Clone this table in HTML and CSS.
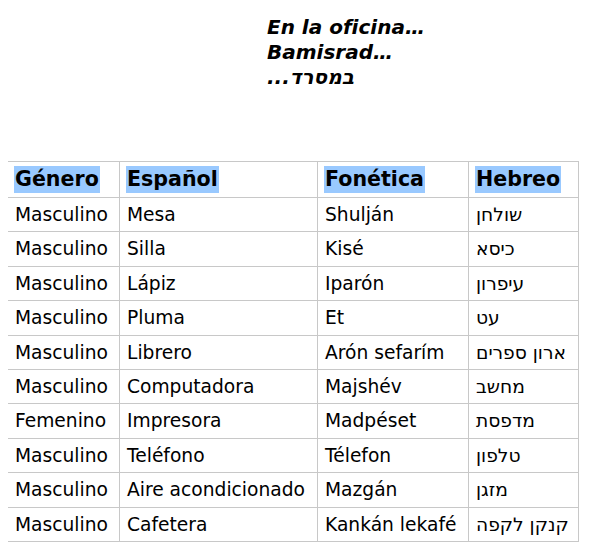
FILE: index.html
```html
<!DOCTYPE html>
<html lang="es">
<head>
<meta charset="utf-8">
<title>En la oficina</title>
<link rel="stylesheet" href="styles.css">
</head>
<body>
<div class="title">
  <div>En la oficina…</div>
  <div>Bamisrad…</div>
  <div dir="ltr">...<span lang="he">במסרד</span></div>
</div>
<table class="vocab">
  <colgroup>
    <col class="c1"><col class="c2"><col class="c3"><col class="c4">
  </colgroup>
  <thead>
    <tr><th><span class="hl">Género</span></th><th><span class="hl">Español</span></th><th><span class="hl">Fonética</span></th><th><span class="hl">Hebreo</span></th></tr>
  </thead>
  <tbody>
    <tr><td>Masculino</td><td>Mesa</td><td>Shulján</td><td lang="he">שולחן</td></tr>
    <tr><td>Masculino</td><td>Silla</td><td>Kisé</td><td lang="he">כיסא</td></tr>
    <tr><td>Masculino</td><td>Lápiz</td><td>Iparón</td><td lang="he">עיפרון</td></tr>
    <tr><td>Masculino</td><td>Pluma</td><td>Et</td><td lang="he">עט</td></tr>
    <tr><td>Masculino</td><td>Librero</td><td>Arón sefarím</td><td lang="he">ארון ספרים</td></tr>
    <tr><td>Masculino</td><td>Computadora</td><td>Majshév</td><td lang="he">מחשב</td></tr>
    <tr><td>Femenino</td><td>Impresora</td><td>Madpéset</td><td lang="he">מדפסת</td></tr>
    <tr><td>Masculino</td><td>Teléfono</td><td>Télefon</td><td lang="he">טלפון</td></tr>
    <tr><td>Masculino</td><td>Aire acondicionado</td><td>Mazgán</td><td lang="he">מזגן</td></tr>
    <tr><td>Masculino</td><td>Cafetera</td><td>Kankán lekafé</td><td lang="he">קנקן לקפה</td></tr>
  </tbody>
</table>
</body>
</html>
```
FILE: styles.css
```css
html, body {
  background: #ffffff;
}
body {
  margin: 8px;
  font-family: "DejaVu Sans", sans-serif;
  color: #000;
}
.title {
  margin: 7px 0 0 259px;
  font-size: 20px;
  line-height: 25px;
  font-weight: bold;
  font-style: italic;
}
.vocab {
  margin-top: 71px;
  margin-left: -1px;
  border-collapse: collapse;
  table-layout: fixed;
  width: 571px;
}
.c1 { width: 112px; }
.c2 { width: 198px; }
.c3 { width: 151px; }
.c4 { width: 110px; }
.vocab th, .vocab td {
  border: 1px solid #c8c8c8;
  text-align: left;
  vertical-align: middle;
  white-space: nowrap;
}
.vocab th {
  padding: 4px 6px;
  font-size: 20.6px;
  font-weight: bold;
}
.hl {
  display: inline-block;
  background: #99c9ff;
  line-height: 27px;
  padding: 0 1px;
}
.vocab td {
  padding: 6px 6px 6px 7px;
  font-size: 18.67px;
  line-height: 21.4px;
}
```
